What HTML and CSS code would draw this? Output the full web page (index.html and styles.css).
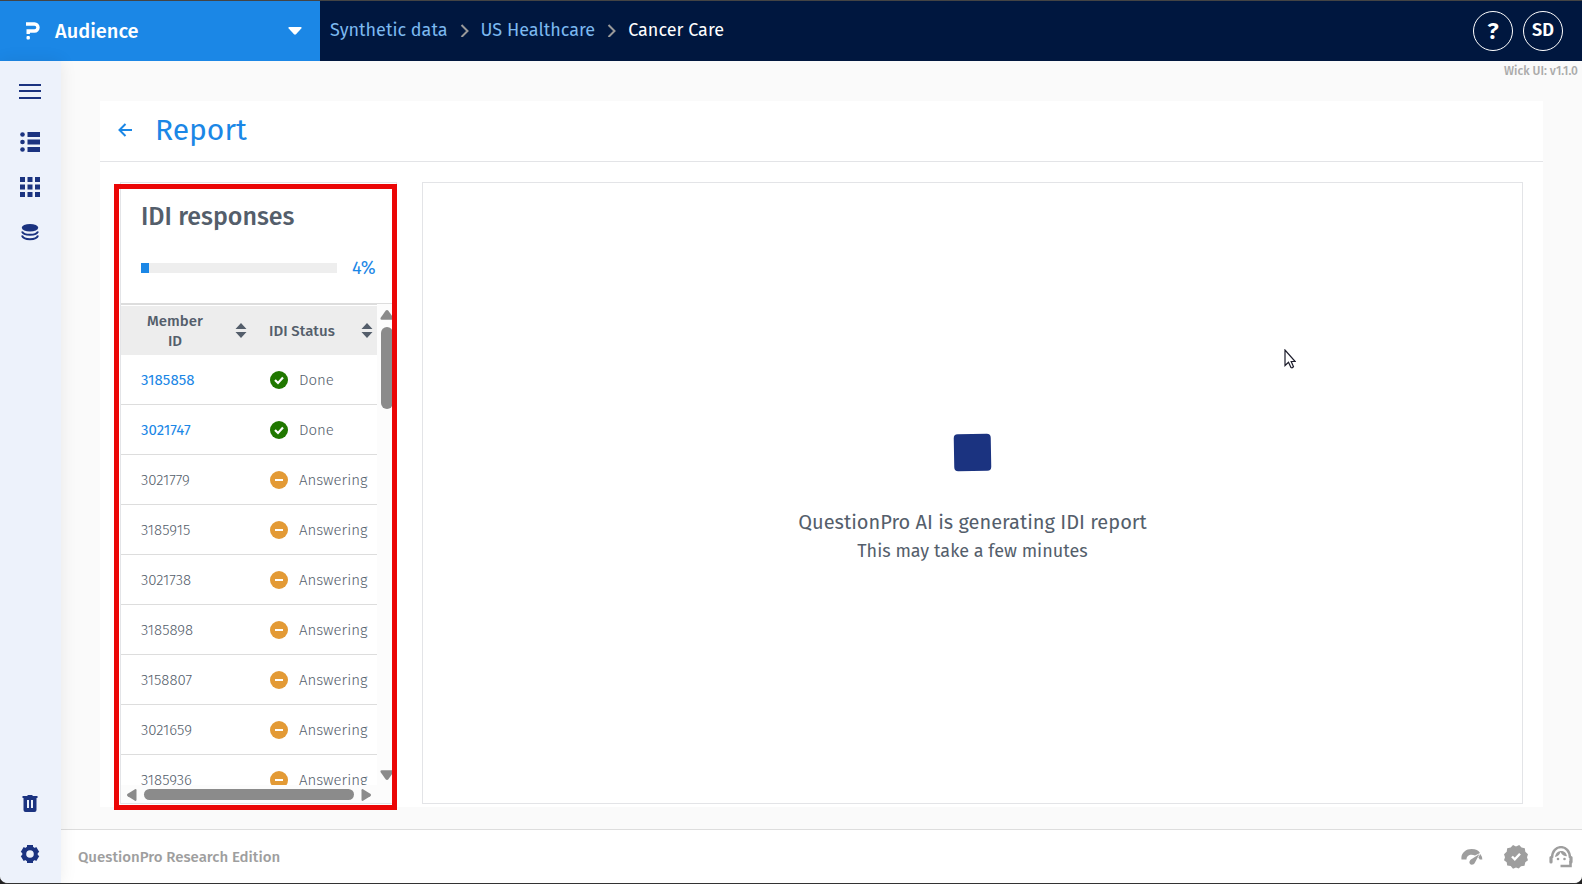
FILE: index.html
```html
<!DOCTYPE html>
<html lang="en">
<head>
    <meta charset="UTF-8">
    <meta name="viewport" content="width=device-width, initial-scale=1.0">
    <title>Report - Cancer Care</title>
    <link rel="stylesheet" href="styles.css">
</head>
<body>
    <header class="topbar">
        <button class="product" type="button">
            <svg class="product-logo" width="14" height="18" viewBox="0 0 14 18">
                <path d="M0 2h8.500a3.400 3.400 0 0 1 0 7H2.200v3" fill="none" stroke="#fff" stroke-width="3.400"/>
                <rect x="0.500" y="14" width="3.400" height="3.400" rx="1" fill="#fff"/>
            </svg>
            <span class="product-name">Audience</span>
            <svg width="14" height="8" viewBox="0 0 14 8"><path d="M1 0h12q1 0.500 0.300 1.500L8 7.300q-1 0.900-2 0L0.700 1.500Q0 0.500 1 0z" fill="#fff"/></svg>
        </button>
        <nav class="breadcrumb">
            <a href="#">Synthetic data</a>
            <svg width="9" height="14" viewBox="0 0 9 14"><path d="M1.500 2l6 6-6 6" fill="none" stroke="#999" stroke-width="2"/></svg>
            <a href="#">US Healthcare</a>
            <svg width="9" height="14" viewBox="0 0 9 14"><path d="M1.500 2l6 6-6 6" fill="none" stroke="#999" stroke-width="2"/></svg>
            <span class="current">Cancer Care</span>
        </nav>
        <div class="user-tools">
            <button class="round-btn help" type="button">?</button>
            <button class="round-btn" type="button">SD</button>
        </div>
    </header>

    <div class="shell">
        <aside class="sidebar">
            <button type="button" aria-label="Menu">
                <svg width="22" height="16" viewBox="0 0 22 16"><path d="M0 1h22M0 7h22M0 14h22" stroke="#1b3380" stroke-width="2"/></svg>
            </button>
            <button type="button" aria-label="List">
                <svg width="20" height="20" viewBox="0 0 20 20" fill="#1b3380">
                    <circle cx="2.500" cy="2.500" r="2.300"/><circle cx="2.500" cy="10" r="2.300"/><circle cx="2.500" cy="17.500" r="2.300"/>
                    <path d="M7.500 0H20v5H7.500zM7.500 7.500H20v5H7.500zM7.500 15H20v5H7.500z"/>
                </svg>
            </button>
            <button type="button" aria-label="Grid">
                <svg width="20" height="20" viewBox="0 0 20 20" fill="#1b3380">
                    <path d="M0 0h5v5H0zM7.500 0h5v5h-5zM15 0h5v5h-5zM0 7.500h5v5H0zM7.500 7.500h5v5h-5zM15 7.500h5v5h-5zM0 15h5v5H0zM7.500 15h5v5h-5zM15 15h5v5h-5z"/>
                </svg>
            </button>
            <button type="button" aria-label="Data">
                <svg width="18" height="18" viewBox="0 0 18 18">
                    <ellipse cx="9" cy="4.800" rx="8.200" ry="3.800" fill="#1b3380"/>
                    <path d="M1 8.500c1.500 4.300 14.500 4.300 16 0M1 12.500c1.500 5 14.500 5 16 0" fill="none" stroke="#1b3380" stroke-width="2"/>
                </svg>
            </button>
            <div class="sidebar-spacer"></div>
            <button type="button" aria-label="Trash">
                <svg width="16" height="17" viewBox="0 0 16 17">
                    <path d="M0.500 1H5l1-1h4l1 1h4.500v2H0.500z" fill="#1b3380"/>
                    <path fill-rule="evenodd" d="M1.500 2h13v13q0 2-2 2h-9q-2 0-2-2zM5 5v8h2V5zM9 5v8h2V5z" fill="#1b3380"/>
                </svg>
            </button>
            <button type="button" aria-label="Settings">
                <svg width="20" height="20" viewBox="0 0 20 20">
                    <path d="M10 1v18M2.200 5.500l15.600 9M2.200 14.500l15.600-9" stroke="#1b3380" stroke-width="6"/>
                    <circle cx="10" cy="10" r="7.800" fill="#1b3380"/>
                    <circle cx="10" cy="10" r="3.800" fill="#edf2fb"/>
                </svg>
            </button>
        </aside>

        <div class="content">
            <main class="report">
                <span class="version">Wick UI: v1.1.0</span>
                <div class="report-head">
                    <a href="#" class="back" aria-label="Back">
                        <svg width="14" height="14" viewBox="0 0 14 14"><path d="M14 7H1.500M7.500 1l-6 6 6 6" fill="none" stroke="#1b87e6" stroke-width="2"/></svg>
                    </a>
                    <h1>Report</h1>
                </div>
                <div class="report-body">
                    <section class="responses">
                        <div class="responses-head">
                            <h2>IDI responses</h2>
                            <div class="progress">
                                <div class="progress-track"><div class="progress-fill" style="width: 4%"></div></div>
                                <span>4%</span>
                            </div>
                        </div>
                        <div class="scroll-area">
                            <div class="table-view">
                                <table>
                                    <thead>
                                        <tr>
                                            <th><div class="th-inner"><span class="th-member">Member ID</span><svg class="sort" width="12" height="16" viewBox="0 0 12 16"><path d="M6 0l5.500 6H0.500zM6 15L0.500 9h11z"/></svg></div></th>
                                            <th><div class="th-inner"><span>IDI Status</span><svg class="sort" width="12" height="16" viewBox="0 0 12 16"><path d="M6 0l5.500 6H0.500zM6 15L0.500 9h11z"/></svg></div></th>
                                        </tr>
                                    </thead>
                                    <tbody id="members"></tbody>
                                </table>
                            </div>
                            <div class="vbar">
                                <svg width="14" height="10" viewBox="0 0 14 10"><path d="M7 0q0.800 0 1.400 0.800L13.500 8q0.500 1.700-1 1.700h-11Q0 9.700 0.500 8l5.100-7.200Q6.200 0 7 0z"/></svg>
                                <div class="vthumb"></div>
                                <svg width="14" height="10" viewBox="0 0 14 10"><path d="M7 10q0.800 0 1.400-0.800L13.500 2q0.500-1.700-1-1.700h-11Q0 0.300 0.500 2l5.100 7.200Q6.200 10 7 10z"/></svg>
                            </div>
                            <div class="hbar">
                                <svg width="10" height="12" viewBox="0 0 10 12"><path d="M0 6q0-0.700 0.700-1.200L8 0.200q1.500-0.500 1.500 1v9.600q0 1.500-1.500 1L0.700 7.200Q0 6.700 0 6z"/></svg>
                                <div class="hthumb"></div>
                                <svg width="10" height="12" viewBox="0 0 10 12"><path d="M10 6q0-0.700-0.700-1.200L2 0.200Q0.500-0.300 0.500 1.200v9.600q0 1.500 1.500 1l7.300-4.600Q10 6.700 10 6z"/></svg>
                            </div>
                        </div>
                    </section>
                    <section class="output">
                        <div class="loader"></div>
                        <p class="generating">QuestionPro AI is generating IDI report</p>
                        <p class="wait">This may take a few minutes</p>
                        <svg class="pointer" width="12" height="20" viewBox="0 0 12 20"><path d="M1 1v15.500l3.500-3.300 2.500 5.300q1.400 0.900 2.500-0.800L7.200 12.500h4z" fill="#fff" stroke="#1c1c2b" stroke-width="1.200"/></svg>
                    </section>
                </div>
            </main>
            <footer class="footer">
                <span>QuestionPro Research Edition</span>
                <div class="footer-icons">
                    <svg width="22" height="18" viewBox="0 0 22 18" fill="#9e9e9e">
                        <path d="M0.500 11.500C-0.500 5 5 1 10.500 1c4.500 0 7 1.500 8.500 4l-5 2.500C9.500 5.500 5.500 7.500 5.500 11.500z"/>
                        <path d="M18.500 6L14 14.500c-1.500 3.500-6.500 2.500-5.500-1 0.500-1.800 2-2.200 3-3z"/>
                        <path d="M19.300 6q2 2.500 2 5.500h-2.500l-1.500-2z"/>
                    </svg>
                    <svg width="24" height="24" viewBox="0 0 24 24">
                        <path d="M12 1.500L15.200 0l2.300 2.600 3.300 0.700 0.500 3.500L24 9.300 23 12.300l1 3-2.700 2-0.800 3.400-3.500 0.500-2.300 2.400L12 22.500 9 23.700l-2.300-2.600-3.500-0.500-0.500-3.400L0 15.300l1-3-1-3L2.700 6.800l0.500-3.500 3.500-0.700L9 0z" fill="#9e9e9e"/>
                        <path d="M8 11.500l2.800 2.800L16 8.800" fill="none" stroke="#fff" stroke-width="2.400"/>
                    </svg>
                    <svg width="24" height="22" viewBox="0 0 24 22" fill="none" stroke="#9e9e9e">
                        <path d="M3 12C3-2.500 21-2.500 21 12" stroke-width="2.400"/>
                        <path d="M2 11.500v4.500M22 11.500v4.500" stroke-width="3.200" stroke-linecap="round"/>
                        <path d="M21.500 15v5H11.500" stroke-width="2.600"/>
                        <path d="M6 11c3.500-0.500 5-3 5.500-5 1.500 3 3.500 4 6.500 4.300C17 3 7 3 6 11z" fill="#9e9e9e" stroke="none"/>
                        <circle cx="9" cy="13" r="1.300" fill="#9e9e9e" stroke="none"/><circle cx="15.500" cy="13" r="1.300" fill="#9e9e9e" stroke="none"/>
                    </svg>
                </div>
            </footer>
        </div>
    </div>

    <script>
        const members = [
            { id: '3185858', status: 'Done' },
            { id: '3021747', status: 'Done' },
            { id: '3021779', status: 'Answering' },
            { id: '3185915', status: 'Answering' },
            { id: '3021738', status: 'Answering' },
            { id: '3185898', status: 'Answering' },
            { id: '3158807', status: 'Answering' },
            { id: '3021659', status: 'Answering' },
            { id: '3185936', status: 'Answering' }
        ];

        const doneIcon = '<svg width="18" height="18" viewBox="0 0 18 18"><circle cx="9" cy="9" r="9" fill="#207800"/><path d="M5 9l3 3 5-5.500" fill="none" stroke="#fff" stroke-width="2.200"/></svg>';
        const answeringIcon = '<svg width="18" height="18" viewBox="0 0 18 18"><circle cx="9" cy="9" r="9" fill="#e39a35"/><rect x="5" y="8" width="8" height="2" fill="#fff"/></svg>';

        document.getElementById('members').innerHTML = members.map(m => {
            const done = m.status === 'Done';
            return `<tr>
                <td>${done ? `<a href="#">${m.id}</a>` : m.id}</td>
                <td><div class="status">${done ? doneIcon : answeringIcon}<span>${m.status}</span></div></td>
            </tr>`;
        }).join('');
    </script>
</body>
</html>
```
FILE: styles.css
```css
* {
    box-sizing: border-box;
}

html {
    background-color: #222;
}

body {
    font-family: "Fira Sans", "Noto Sans", sans-serif;
    margin: 0;
    height: 100vh;
    min-height: 600px;
    display: flex;
    flex-direction: column;
    overflow: hidden;
    color: #545e6b;
    background-color: #fafafa;
    border-top: 1px solid #444;
    border-bottom: 1px solid #333;
    border-radius: 0 0 8px 8px;
}

button {
    font-family: inherit;
    border: none;
    background: none;
    padding: 0;
    cursor: pointer;
}

a {
    color: #1b87e6;
    text-decoration: none;
}

svg {
    display: block;
    flex: none;
}

h1, h2, p {
    margin: 0;
}

/* Top bar */
.topbar {
    display: flex;
    align-items: center;
    height: 60px;
    flex: none;
    background-color: #00173f;
}

.product {
    display: flex;
    align-items: center;
    width: 320px;
    height: 60px;
    padding: 0 18px 0 26px;
    color: #fff;
    background-color: #1b87e6;
    font-size: 20px;
    font-weight: 500;
}

.product-name {
    flex: 1;
    margin-left: 15px;
    text-align: left;
}

.breadcrumb {
    display: flex;
    align-items: center;
    gap: 12px;
    flex: 1;
    padding: 0 0 2px 10px;
    font-size: 18px;
}

.breadcrumb a {
    color: #7cb9f0;
}

.breadcrumb .current {
    color: #fff;
}

.user-tools {
    display: flex;
    gap: 10px;
    padding-right: 19px;
}

.round-btn {
    width: 40px;
    height: 40px;
    padding-bottom: 2px;
    border: 1px solid #fff;
    border-radius: 50%;
    color: #fff;
    font-size: 18px;
    font-weight: 600;
}

.round-btn.help {
    padding: 0;
    font-size: 24px;
}

/* Sidebar */
.shell {
    display: flex;
    flex: 1;
    min-height: 0;
}

.sidebar {
    position: relative;
    display: flex;
    flex-direction: column;
    width: 61px;
    flex: none;
    padding: 8px 1px 7px 0;
    background-color: #edf2fb;
    box-shadow: 0 0 16px rgba(0, 0, 0, 0.08);
    z-index: 1;
}

.sidebar button {
    display: flex;
    align-items: center;
    justify-content: center;
    height: 45px;
}

.sidebar button:first-child {
    margin-bottom: 5px;
}

.sidebar button:last-child {
    margin-top: 5px;
}

.sidebar-spacer {
    flex: 1;
}

/* Report */
.content {
    display: flex;
    flex-direction: column;
    flex: 1;
    min-width: 0;
}

.report {
    position: relative;
    display: flex;
    flex-direction: column;
    flex: 1;
    min-height: 0;
    margin: 40px 39px 22px 39px;
    background-color: #fff;
}

.version {
    position: absolute;
    top: -40px;
    right: -35px;
    font-size: 12px;
    line-height: 20px;
    font-weight: 500;
    color: #aaa;
}

.report-head {
    display: flex;
    align-items: center;
    gap: 23px;
    height: 61px;
    flex: none;
    padding: 0 0 2px 18px;
    border-bottom: 1px solid #e3e4e7;
}

.report-head h1 {
    font-size: 30px;
    line-height: 56px;
    font-weight: 400;
    color: #1b87e6;
}

.report-body {
    display: flex;
    gap: 25px;
    flex: 1;
    min-height: 0;
    padding: 20px 20px 3px;
}

.responses {
    position: relative;
    display: flex;
    flex-direction: column;
    width: 277px;
    flex: none;
    border: 1px solid #e3e4e7;
}

/* Highlight frame */
.responses::after {
    content: "";
    position: absolute;
    top: 1px;
    right: -1px;
    bottom: -7px;
    left: -7px;
    border: 5px solid #eb0606;
    pointer-events: none;
}

.responses-head {
    height: 121px;
    flex: none;
    padding: 16px 17px 0 20px;
    border-bottom: 1px solid #ddd;
}

.responses-head h2 {
    font-size: 25px;
    line-height: 36px;
    font-weight: 500;
}

.progress {
    display: flex;
    align-items: center;
    gap: 15px;
    margin-top: 21px;
    color: #1b87e6;
    font-size: 18px;
    line-height: 24px;
}

.progress-track {
    width: 196px;
    height: 10px;
    background-color: #eee;
}

.progress-fill {
    height: 10px;
    background-color: #1b87e6;
}

.scroll-area {
    display: grid;
    grid-template-columns: 1fr 19px;
    grid-template-rows: 1fr 18px;
    flex: 1;
    min-height: 0;
    background-color: #fcfcfc;
}

.table-view {
    overflow: hidden;
    padding-top: 1px;
    background-color: #fff;
    border-top: 1px solid #ddd;
}

table {
    width: 100%;
    border-spacing: 0;
    table-layout: fixed;
    font-size: 15px;
    line-height: 20px;
}

th {
    height: 49px;
    padding: 0 4px 0 20px;
    background-color: #ededed;
    font-weight: 500;
}

th:first-child {
    padding-right: 2px;
}

.th-inner {
    display: flex;
    align-items: center;
    justify-content: space-between;
}

.th-member {
    width: 68px;
}

.sort {
    fill: #545e6b;
}

td {
    height: 50px;
    padding: 0 0 0 20px;
    border-bottom: 1px solid #ddd;
    font-weight: 300;
}

td a {
    font-weight: 400;
}

.status {
    display: flex;
    align-items: center;
    gap: 11px;
    padding-left: 1px;
}

.vbar,
.hbar {
    display: flex;
    align-items: center;
    fill: #8b8b8b;
}

.vbar {
    flex-direction: column;
    padding: 6px 0 5px;
}

.vthumb {
    width: 12px;
    height: 82px;
    margin: 7px 0 auto;
    border-radius: 6px;
    background-color: #8b8b8b;
}

.hbar {
    gap: 7px;
    padding: 1px 6px 0;
}

.hthumb {
    flex: 1;
    height: 11px;
    border-radius: 6px;
    background-color: #8b8b8b;
}

.output {
    position: relative;
    display: flex;
    flex-direction: column;
    align-items: center;
    justify-content: center;
    flex: 1;
    padding-top: 12px;
    border: 1px solid #e3e4e7;
}

.loader {
    width: 37px;
    height: 37px;
    margin-bottom: 36px;
    border-radius: 4px;
    background-color: #1b3380;
    transform: rotate(-1deg);
}

.generating {
    font-size: 20px;
    line-height: 30px;
}

.wait {
    font-size: 18px;
    line-height: 28px;
}

.pointer {
    position: absolute;
    top: 166px;
    right: 226px;
}

/* Footer */
.footer {
    display: flex;
    align-items: center;
    justify-content: space-between;
    height: 54px;
    flex: none;
    padding: 0 9px 0 17px;
    border-top: 1px solid #ddd;
    background-color: #fff;
    color: #9e9e9e;
    font-size: 15px;
    font-weight: 500;
}

.footer-icons {
    display: flex;
    align-items: center;
    gap: 21px;
}
```
